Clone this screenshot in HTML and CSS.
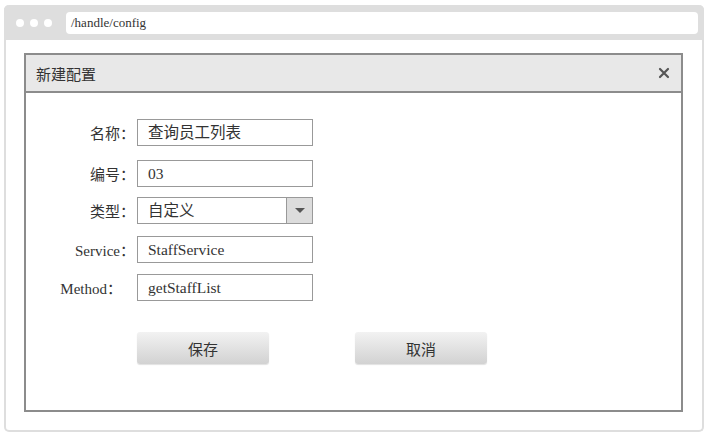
FILE: index.html
```html
<!DOCTYPE html>
<html lang="zh-CN">
<head>
  <meta charset="UTF-8" />
  <title>新建配置</title>
  <link rel="stylesheet" href="styles.css">
</head>
<body>

<div class="browser">
  <div class="topbar">
    <div class="dots">
      <span></span><span></span><span></span>
    </div>
    <div class="url">/handle/config</div>
  </div>

  <div class="dialog">
    <div class="dialog-head">
      <span class="dialog-title">新建配置</span>
      <svg class="close" width="12" height="12" viewBox="0 0 12 12">
        <path d="M2 2 L10 10 M10 2 L2 10" stroke="#555" stroke-width="2.2" stroke-linecap="round" />
      </svg>
    </div>

    <form class="config-form" autocomplete="off">
      <div class="row">
        <label class="lbl">名称：</label>
        <div class="field">查询员工列表</div>
      </div>
      <div class="row row-num">
        <label class="lbl">编号：</label>
        <div class="field">03</div>
      </div>
      <div class="row row-type">
        <label class="lbl">类型：</label>
        <div class="field select">
          <span class="select-val">自定义</span>
          <span class="select-arrow"></span>
        </div>
      </div>
      <div class="row row-service">
        <label class="lbl">Service：</label>
        <div class="field">StaffService</div>
      </div>
      <div class="row">
        <label class="lbl lbl-method">Method：</label>
        <div class="field">getStaffList</div>
      </div>

      <div class="actions">
        <button type="button" class="btn">保存</button>
        <button type="button" class="btn">取消</button>
      </div>
    </form>
  </div>
</div>

</body>
</html>
```

FILE: styles.css
```css
* {
  box-sizing: border-box;
}

body {
  margin: 0;
  padding: 5px 5px 5px 4px;
  background: #fff;
  font-family: "Liberation Serif", "Noto Sans CJK SC", serif;
  font-size: 15px;
  color: #333;
}

.browser {
  width: 700px;
  height: 427px;
  border: 2px solid #dedede;
  border-top: none;
  border-radius: 5px;
  display: flex;
  flex-direction: column;
}

.topbar {
  height: 35px;
  background: #dedede;
  border-radius: 5px 5px 0 0;
  display: flex;
  align-items: center;
  padding: 0 6px 0 12px;
  margin: 0 -2px;
}

.dots {
  display: flex;
  gap: 6px;
  width: 50px;
}

.dots span {
  width: 8px;
  height: 8px;
  border-radius: 50%;
  background: #fff;
}

.url {
  flex: 1;
  height: 22px;
  background: #fff;
  border-radius: 4px;
  padding: 0 5px;
  font-size: 13px;
  line-height: 22px;
  color: #333;
}

.dialog {
  margin: 13px 19px 18px 18px;
  flex: 1;
  border: 2px solid #8c8c8c;
  display: flex;
  flex-direction: column;
}

.dialog-head {
  height: 38px;
  background: #e8e8e8;
  border-bottom: 2px solid #8c8c8c;
  display: flex;
  align-items: center;
  justify-content: space-between;
  padding: 0 11px 0 10px;
}

.dialog-title {
  font-size: 15px;
  color: #333;
}

.close {
  display: block;
}

.config-form {
  padding: 26px 0 0 0;
  display: flex;
  flex-direction: column;
  gap: 11px;
}

.row {
  display: flex;
  align-items: center;
}

.row-num {
  margin-top: 3px;
}

.row-type {
  margin-top: -1px;
}

.row-service {
  margin-top: 1px;
}

.lbl {
  width: 109px;
  margin-right: 2px;
  text-align: right;
  color: #333;
}

.lbl-method {
  width: 96px;
  margin-right: 15px;
}

.field {
  width: 176px;
  height: 27px;
  border: 1px solid #999;
  padding: 0 10px;
  font-size: 15.5px;
  line-height: 25px;
  color: #333;
}

.select {
  display: flex;
  padding-right: 0;
}

.select-val {
  flex: 1;
}

.select-arrow {
  width: 26px;
  height: 25px;
  background: #dcdcdc;
  border-left: 1px solid #999;
  position: relative;
}

.select-arrow::after {
  content: "";
  position: absolute;
  left: 8px;
  top: 10px;
  border-left: 5px solid transparent;
  border-right: 5px solid transparent;
  border-top: 5px solid #555;
}

.actions {
  display: flex;
  gap: 86px;
  padding-left: 111px;
  margin-top: 20px;
}

.btn {
  width: 132px;
  height: 32px;
  border: none;
  border-radius: 3px;
  background: linear-gradient(#f2f2f2, #d2d2d2);
  box-shadow: 0 1px 1px rgba(0,0,0,0.12);
  font-family: "Liberation Serif", "Noto Sans CJK SC", serif;
  font-size: 15px;
  color: #333;
}
```
